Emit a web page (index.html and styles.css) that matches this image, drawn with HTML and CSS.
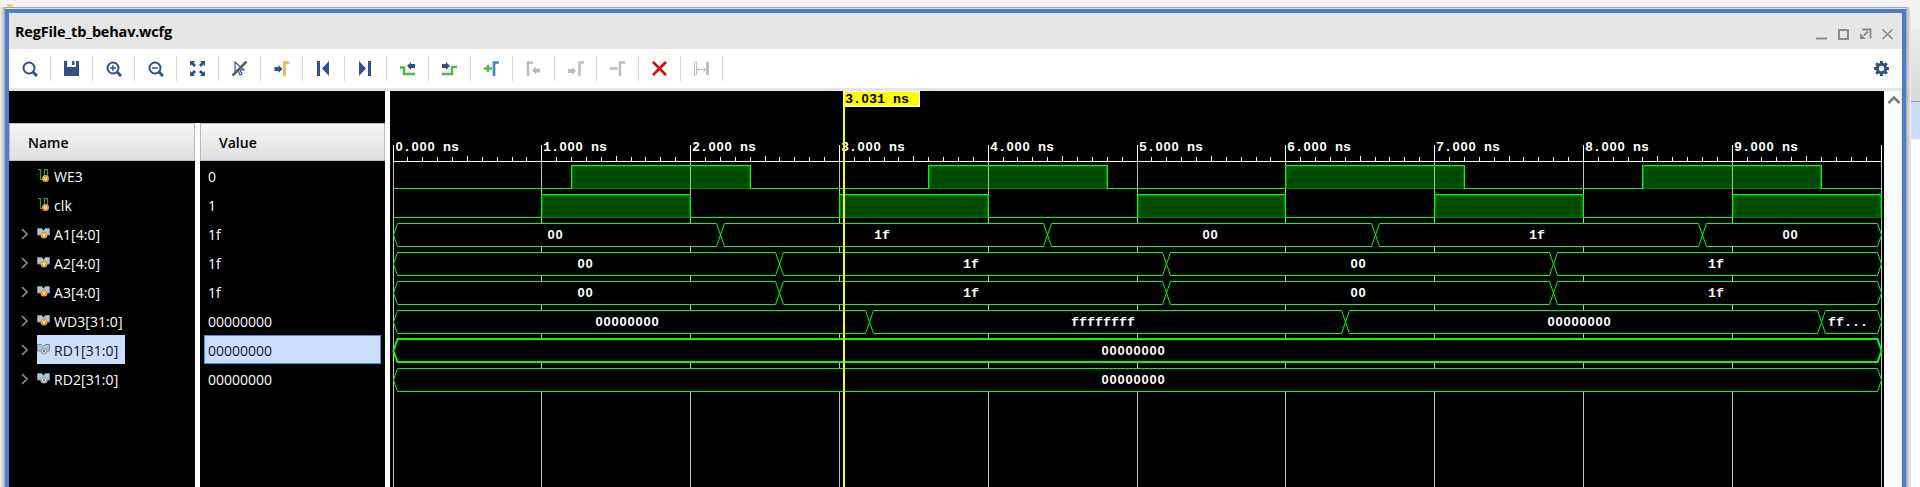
FILE: index.html
```html
<!DOCTYPE html>
<html lang="en">
<head>
<meta charset="utf-8">
<title>RegFile_tb_behav.wcfg</title>
<link rel="stylesheet" href="styles.css">
</head>
<body>
<div class="desk">
<svg class="spark" width="8" height="3" viewBox="0 0 8 3"><path d="M0 0h4l3 3H0z" fill="#dfdf5c"/></svg>
<div class="edge-left"></div>
<div class="window">
  <header class="title">
    <h1>RegFile_tb_behav.wcfg</h1>
    <svg class="controls" width="80" height="14" viewBox="0 0 80 14" fill="none" stroke="#8c8c8c">
      <path d="M0 11.500h11" stroke-width="2"/>
      <rect x="23" y="3" width="9" height="9" stroke-width="2"/>
      <path d="M46 2.500h8.500v9" stroke-width="2"/><path d="M52 4.500l-4 4" stroke-width="2"/><path d="M44 6l6 6h-6z" fill="#8c8c8c" stroke="none"/>
      <path d="M66.500 2.500l10 9.500M76.500 2.500l-10 9.500" stroke-width="1.700"/>
    </svg>
  </header>
  <nav class="toolbar" id="toolbar"></nav>
  <main class="body">
    <section class="signals">
      <div class="column names"><div class="head">Name</div><div id="names"></div></div>
      <div class="column values"><div class="head">Value</div><div id="values"></div></div>
    </section>
    <svg class="wave" id="wave" width="1494" height="396" viewBox="390 91 1494 396"></svg>
    <aside class="scroll"><svg width="14" height="10" viewBox="0 0 14 10"><path d="M1.500 8L7 2.500 12.500 8" fill="none" stroke="#7b7b7b" stroke-width="2.600"/></svg></aside>
  </main>
</div>
<div class="edge-right"></div>
<div class="behind"><div class="behind-top"></div><div class="behind-tab"></div><div class="behind-row"></div></div>
</div>
<script src="main.js"></script>
</body>
</html>
```
FILE: styles.css
```css
* { box-sizing: border-box; }
body { margin: 0; background: #f2f2f2; font-family: "Open Sans", "Noto Sans", sans-serif; }
.desk { display: flex; position: relative; width: 1920px; height: 487px; overflow: hidden; background: #f2f2f2; }
.spark { position: absolute; left: 7px; top: 4px; }
.edge-left { width: 5px; margin-top: 7px; background: linear-gradient(90deg, #ececec, #dcdcdc 40%, #a4a4a4); }
.window { width: 1901px; height: 480px; margin-top: 7px; padding-top: 1px; background: #e4e4e4; border-top: 1px solid #a4a4a4; display: flex; flex-direction: column; }
.title { height: 40px; flex: none; border: 4px solid #4a7dd0; border-bottom: 0; background: #e6e6e6; display: flex; justify-content: space-between; align-items: center; padding: 0 6px 0 6px; }
.title h1 { margin: 0; padding-top: 1px; font-size: 14.5px; line-height: 20px; font-weight: 700; letter-spacing: -0.2px; color: #000; }
.controls { margin-top: 5px; }
.toolbar { height: 39px; flex: none; background: #fff; border: solid #4a7dd0; border-width: 0 4px; display: flex; align-items: center; }
.tool { width: 42px; height: 25px; border-right: 1px solid #d6d6d6; padding: 5px 0 0 13px; }
.tool svg { display: block; }
.tool.gear { margin-left: auto; border-right: 0; width: 41px; }
.body { flex: none; height: 399px; border: solid #4a7dd0; border-width: 0 4px; display: flex; padding-top: 3px; background: #e6e6e6; }
.signals { width: 376px; height: 396px; background: #000; padding-top: 32px; display: flex; flex: none; }
.column { background: #000; color: #fff; font-size: 14px; height: 364px; }
.names { width: 191px; border-right: 5px solid #fff; }
.values { width: 185px; }
.head { height: 38px; border: 1px solid #bababa; background: linear-gradient(#f5f5f5, #dfdfe1); color: #000; font-weight: 600; line-height: 37px; padding-left: 18px; }
.line { height: 29px; display: flex; align-items: center; white-space: pre; }
.names .line { padding-left: 11px; }
.arrow { width: 17px; display: flex; }
.label { display: flex; align-items: center; height: 29px; padding-right: 7px; letter-spacing: 0.07px; }
.label svg { margin-right: 4px; }
.text { padding-top: 2px; }
.selected .label { background: #ccdeff; color: #111; }
.values .line { margin: 0 4px; padding-left: 4px; }
.values .selected { background: #ccdeff; color: #111; border: 1px solid #4692d2; padding-left: 3px; }
.wave { flex: none; display: block; box-sizing: content-box; border-left: 5px solid #fff; background: #000; }
.scroll { width: 18px; height: 396px; background: #fbfbfb; border-right: 1px solid #ececec; padding: 4px 0 0 3px; }
.scroll svg { display: block; }
.edge-right { width: 5px; margin-top: 7px; background: linear-gradient(90deg, #a4a4a4, #c8c8c8 40%, #efefef); }
.behind { flex: 1; background: #fff; }
.behind-top { height: 29px; background: #f2f2f2; }
.behind-tab { height: 73px; background: linear-gradient(#ececec, #d8d8d8); border-bottom: 1px solid #999; }
.behind-row { height: 37px; background: #ccdeff; }
.digits { font-family: "Liberation Mono", monospace; font-weight: 700; font-size: 13.333px; }
.zero { font-family: "Liberation Sans", sans-serif; font-size: 13px; }
```
FILE: main.js
```js
const N = '#334f87', G = '#4fb944', D = '#bdbdbd';
const lens = `<circle cx="7" cy="7" r="5.500" fill="none" stroke="${N}" stroke-width="2"/><path d="M11 11l4 4" stroke="${N}" stroke-width="3"/>`;
const left = (x, y, c) => `<path d="M${x} ${y}l4-4v2h4v4h-4v2z" fill="${c}"/>`;
const right = (x, y, c) => `<path d="M${x} ${y}l-4-4v2h-4v4h4v2z" fill="${c}"/>`;
const icons = [
  lens,
  `<path d="M0 0h3v6h9V0h3v15H0z" fill="${N}"/><path d="M8 0h2.500v4H8z" fill="${N}"/>`,
  lens + `<path d="M4 7h6M7 4v6" stroke="${N}" stroke-width="1.400"/>`,
  lens + `<path d="M4 7h6" stroke="${N}" stroke-width="1.400"/>`,
  `<path d="M0 0h5L3.500 1.500 6 4 4 6 1.500 3.500 0 5zM15 0v5l-1.500-1.500L11 6 9 4l2.500-2.500L10 0zM0 15v-5l1.500 1.500L4 9l2 2-2.500 2.500L5 15zM15 15h-5l1.500-1.500L9 11l2-2 2.500 2.500L15 10z" fill="${N}"/>`,
  `<path d="M3 1v11l3-2.500 2 4.500 2-1-2-4h4z" fill="none" stroke="${N}" stroke-width="1.200"/><path d="M.5 14.500L14.500 .5" stroke="#5e5e5e" stroke-width="2.600"/>`,
  right(8.5, 8, N) + `<path d="M10.500 15V1.500H15" fill="none" stroke="#dfc75c" stroke-width="3"/>`,
  `<path d="M1 0h3v15H1zM13 0v15L6 7.500z" fill="${N}"/>`,
  `<path d="M1 0v15l7-7.500zM10 0h3v15h-3z" fill="${N}"/>`,
  `<path d="M0 6.500h4V13h11" fill="none" stroke="${G}" stroke-width="2.400"/>` + left(7, 5, N),
  `<path d="M0 13h10V6h5" fill="none" stroke="${G}" stroke-width="2.400"/>` + right(8, 5, N),
  `<path d="M0 7.500h8M4 4v7" stroke="${G}" stroke-width="2.600"/><path d="M10 15V1.500h5" fill="none" stroke="#4487b8" stroke-width="2.700"/>`,
  `<path d="M2 15V1.500h5" fill="none" stroke="${D}" stroke-width="2.500"/>` + left(6, 9.5, D),
  `<path d="M11.500 15V1.500H16" fill="none" stroke="${D}" stroke-width="2.500"/>` + right(8, 10, D),
  `<path d="M0 7.500h8M10 15V1.500h5" fill="none" stroke="${D}" stroke-width="2.500"/>`,
  `<path d="M1 1l13 13M14 1L1 14" stroke="#e60000" stroke-width="2.600"/>`,
  `<path d="M.5 1h2v13h-2z" fill="none" stroke="${D}"/><path d="M12 1h3v13h-3z" fill="${D}"/><path d="M3 8.500h8M5 6.500l-2 2 2 2M9.500 6.500l2 2-2 2" fill="none" stroke="${D}"/>`
];
const svg = (s) => `<svg width="16" height="16" viewBox="0 0 16 16">${s}</svg>`;
let teeth = '';
for (let a = 0; a < 360; a += 45) teeth += `<path d="M6 0h3v4H6z" transform="rotate(${a} 7.500 7.500)"/>`;
document.getElementById('toolbar').innerHTML = icons.map(i => `<div class="tool">${svg(i)}</div>`).join('') +
  `<div class="tool gear">${svg(`<g fill="${N}">${teeth}</g><circle cx="7.500" cy="7.500" r="4.200" fill="none" stroke="${N}" stroke-width="3"/>`)}</div>`;

const signals = [
  ['WE3', '0', 'bit'], ['clk', '1', 'bit'], ['A1[4:0]', '1f', 'in'], ['A2[4:0]', '1f', 'in'],
  ['A3[4:0]', '1f', 'in'], ['WD3[31:0]', '00000000', 'in'], ['RD1[31:0]', '00000000', 'out'], ['RD2[31:0]', '00000000', 'out']
];
const badge = `<circle cx="7" cy="8" r="3.500" fill="#f0942c"/><path d="M5.700 6.500L7 9.500l1.300-3" fill="none" stroke="#fff"/>`;
const outBadge = `<circle cx="7" cy="8" r="2.700" fill="#fff" stroke="#aaa" stroke-width="1.800"/><circle cx="7" cy="8" r="1.200" fill="#777"/>`;
const bus = `<path d="M.5 1.500h4l2 2 2-2h4v6.500H.5z" fill="#a3c9dc" stroke="#728e9d"/>`;
const kind = {
  bit: `<path d="M1 .5h2.500v10H6M7.500 8V.5h3v7" fill="none" stroke="#35963f" stroke-width="1.300"/><g transform="translate(1.500 1.500)">${badge}</g>`,
  in: bus + badge, out: bus + outBadge
};
document.getElementById('names').innerHTML = signals.map(([n, , k], i) =>
  `<div class="line${i === 6 ? ' selected' : ''}"><span class="arrow">${k === 'bit' ? '' : '<svg width="9" height="12" viewBox="0 0 9 12"><path d="M2 1l5 5-5 5" fill="none" stroke="#8d8d8d" stroke-width="1.600"/></svg>'}</span><span class="label"><svg width="13" height="13" viewBox="0 0 13 13">${kind[k]}</svg><span class="text">${n}</span></span></div>`).join('');
document.getElementById('values').innerHTML = signals.map(([, v], i) => `<div class="line${i === 6 ? ' selected' : ''}"><span class="text">${v}</span></div>`).join('');

const px = t => Math.floor(393 + 148.8 * t + 1e-6);
const rect = (x, y, w, h, c) => `<rect x="${x}" y="${y}" width="${w}" height="${h}" fill="${c}"/>`;
// Fixed 8px cells, each glyph centred in its cell; zeros are drawn without an inner dot
const text = (s, x, y, c) => `<text class="digits" y="${y}" text-anchor="middle" fill="${c}" x="${[...s].map((_, i) => x + 4 + i * 8).join(' ')}">${s.replace(/0+/g, '<tspan class="zero">$&</tspan>')}</text>`;
let out = '';
for (let n = 0; n <= 10; n++) {
  out += rect(px(n), 145, 1, 17, '#fff') + rect(px(n), 162, 1, 325, '#c0c0c0');
  if (n < 10) {
    out += text(n + '.000 ns', px(n) + 2, 151, '#fff');
    for (let k = 1; k < 10; k++) out += rect(px(n + k / 10), k === 5 ? 156 : 157, 1, 5, '#fff');
  }
}
out += rect(393, 161, 1489, 1, '#fff');

function digital(top, highs) {
  let at = 0;
  for (const [a, b] of highs) {
    const x = px(a), e = px(b), w = e - x;
    out += rect(px(at), top + 23, x - px(at) + 1, 1, '#0f0');
    out += rect(x, top, w + 1, 24, 'rgba(0,255,0,.3)');
    out += `<rect x="${x + 1.5}" y="${top + 1.5}" width="${w - 2}" height="22" fill="none" stroke="rgba(0,255,0,.3)"/>`;
    out += rect(x, top, w + 1, 1, '#0f0') + rect(x, top, 1, 24, '#0f0') + rect(e, top, 1, 24, '#0f0');
    at = b;
  }
  if (at < 10) out += rect(px(at), top + 23, px(10) - px(at), 1, '#0f0');
}
digital(165, [[1.2, 2.4], [3.6, 4.8], [6, 7.2], [8.4, 9.6]]);
digital(194, [[1, 2], [3, 4], [5, 6], [7, 8], [9, 10]]);

function busRow(top, edges, labels, thick) {
  labels.forEach((s, i) => {
    const a = px(edges[i]) + .5, b = px(edges[i + 1]) + .5, y = top + .5;
    const o = thick ? -.5 : 0;
    out += `<path d="M${a} ${y + 11.5}L${a + 4} ${y + o}H${b - 4}L${b} ${y + 11.5}L${b - 4} ${y + o + 23}H${a + 4}z" fill="#000" stroke="#0f0" stroke-width="${thick ? 2 : 1}"/>`;
    out += text(s, Math.floor((a + b) / 2 - 4.5 * s.length - .5), top + 16, '#fff');
  });
}
busRow(223, [0, 2.2, 4.4, 6.6, 8.8, 10], ['00', '1f', '00', '1f', '00']);
busRow(252, [0, 2.6, 5.2, 7.8, 10], ['00', '1f', '00', '1f']);
busRow(281, [0, 2.6, 5.2, 7.8, 10], ['00', '1f', '00', '1f']);
busRow(310, [0, 3.2, 6.4, 9.6, 10], ['00000000', 'ffffffff', '00000000', 'ff...']);
busRow(339, [0, 10], ['00000000'], true);
busRow(368, [0, 10], ['00000000']);
out += rect(843, 91, 2, 396, '#ff0') + rect(843, 91, 77, 16, '#fff') + rect(844, 92, 75, 14, '#ff0') + text('3.031 ns', 845, 103, '#000');
document.getElementById('wave').innerHTML = out;
```
